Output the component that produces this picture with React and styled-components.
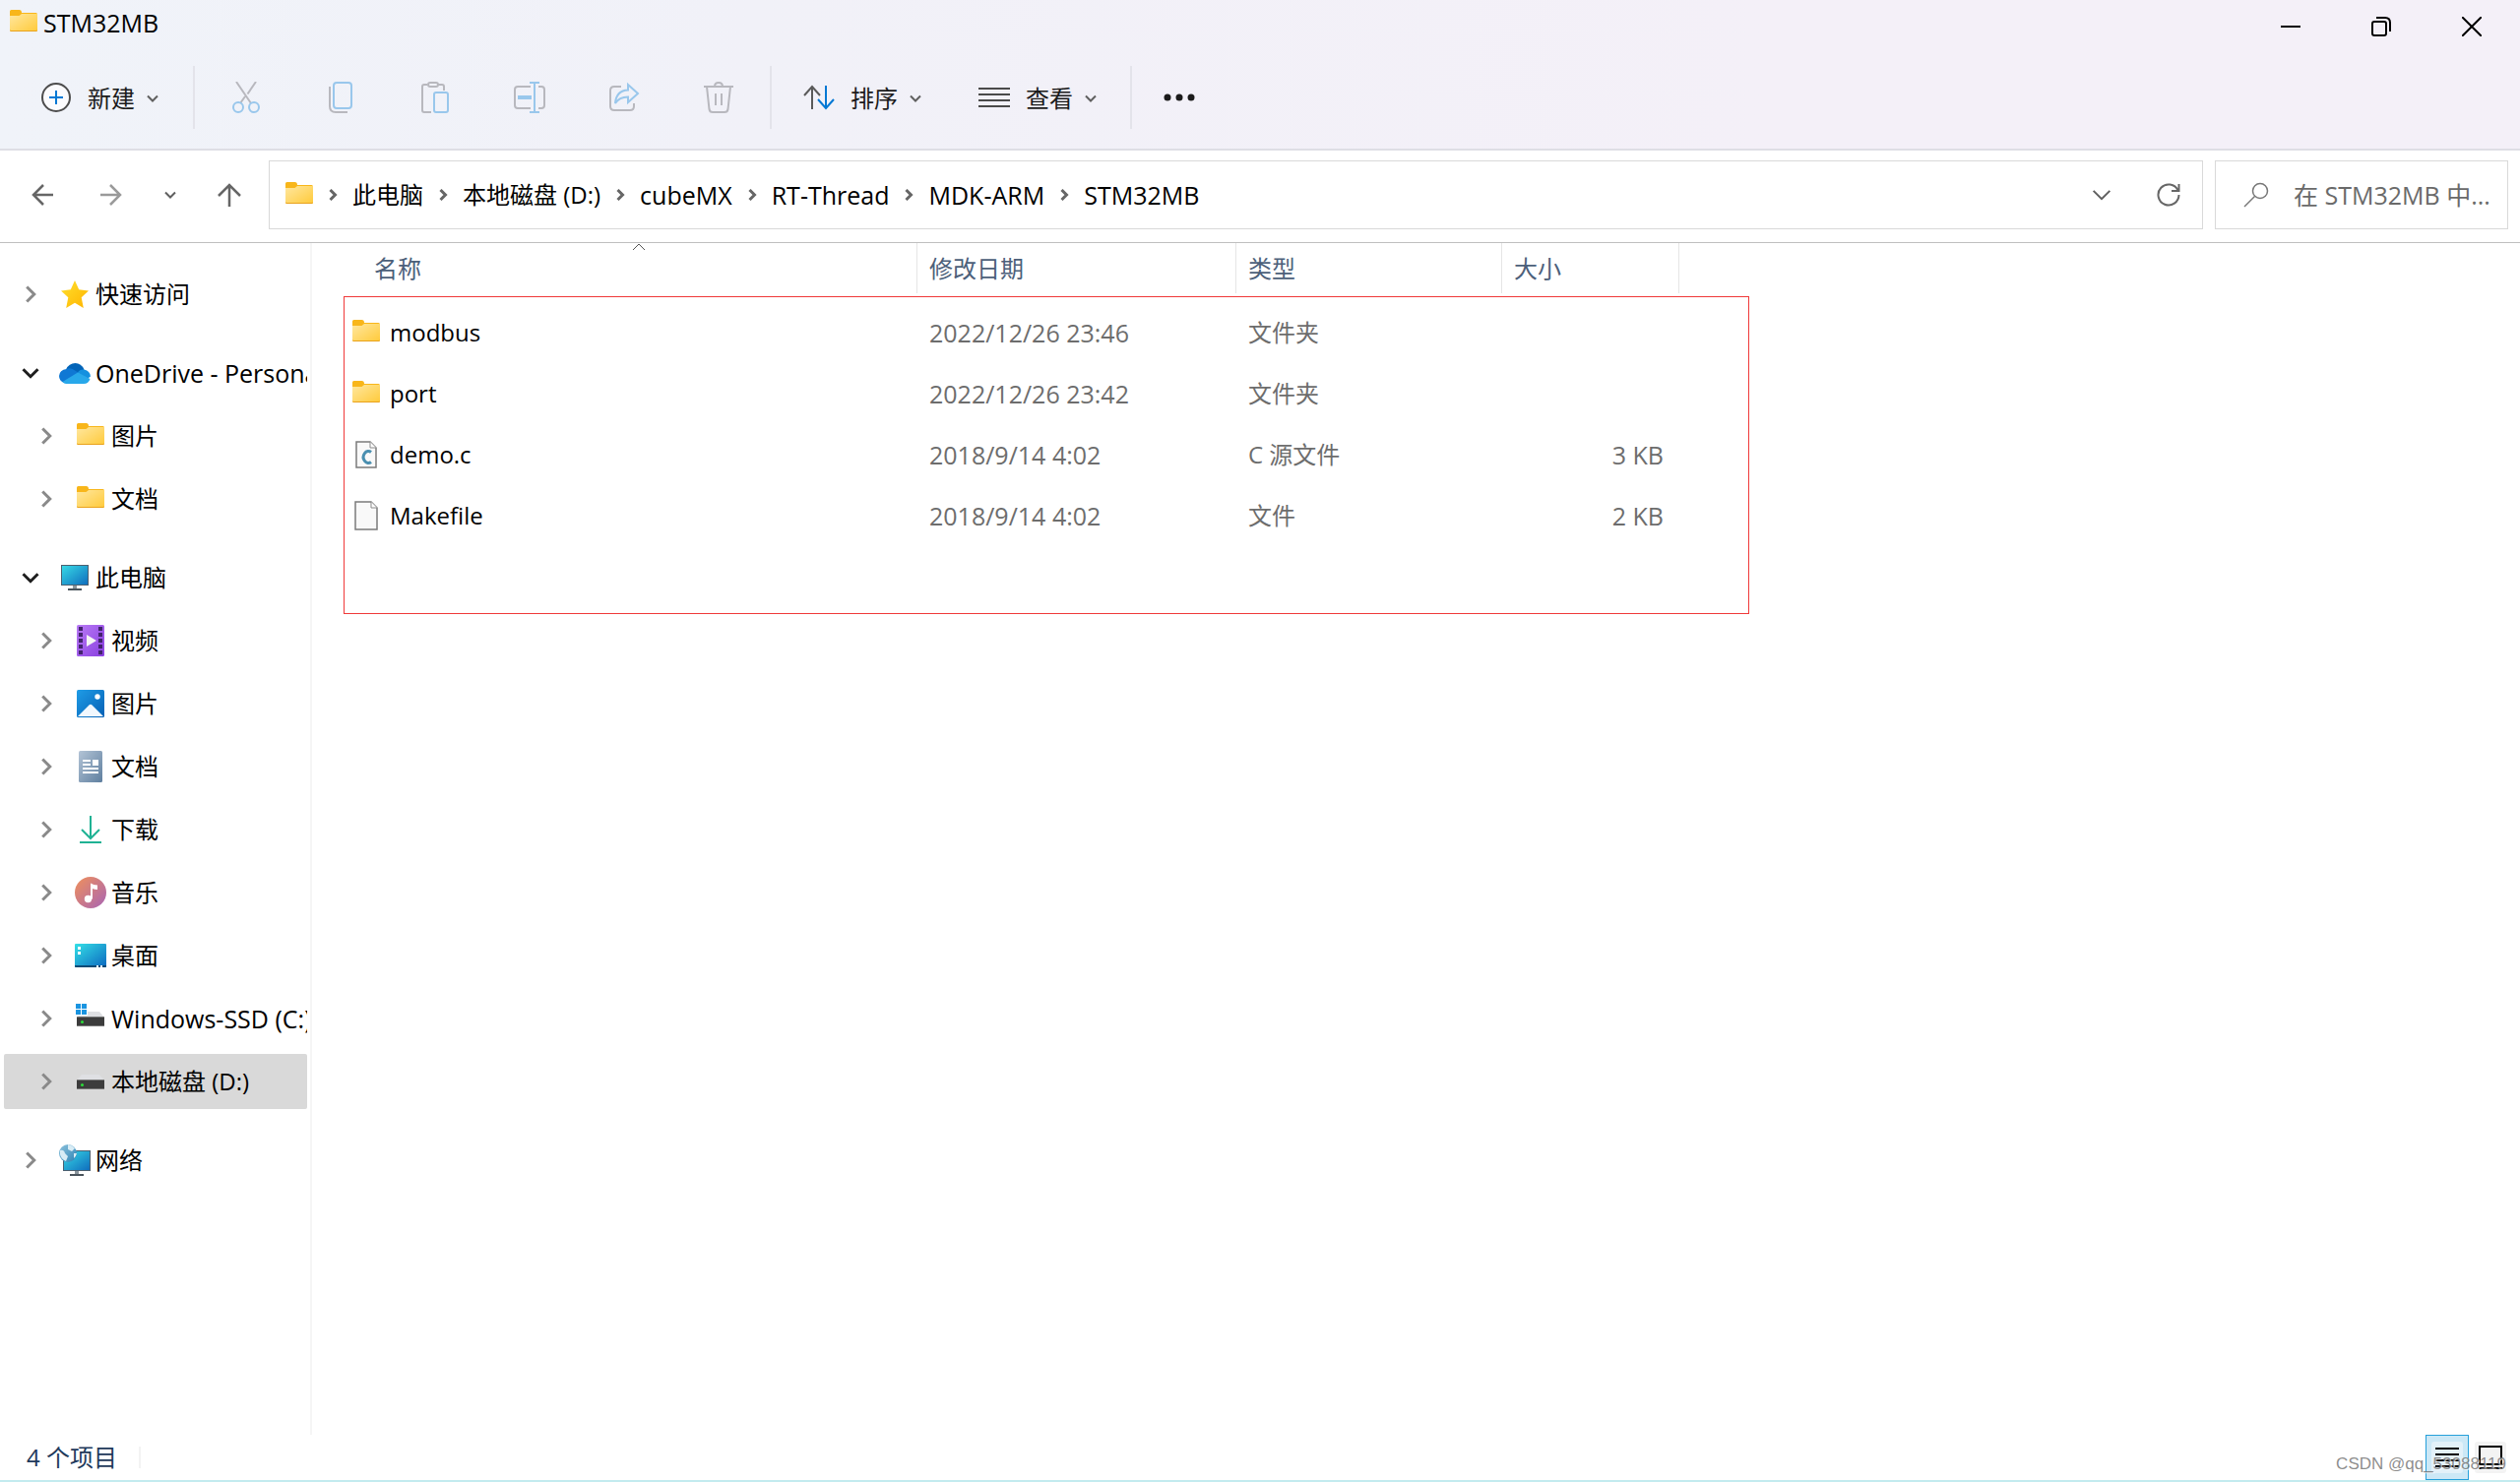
import React from 'react';
import styled, { createGlobalStyle, css } from 'styled-components';

const Global = createGlobalStyle`
  *, *::before, *::after { box-sizing: border-box; }
  body { margin: 0; background: #fff; color: #000; }
  body, button, input {
    font-family: 'Open Sans', 'Noto Sans CJK SC', sans-serif;
    font-size: 24px;
    line-height: 32px;
  }
  button { margin: 0; padding: 0; border: 0; background: none; color: inherit; }
  svg { display: block; flex: none; }
`;

const Window = styled.div`
  display: flex;
  flex-direction: column;
  min-height: 100vh;
`;

const Header = styled.header`
  background: linear-gradient(90deg, #f0f3f9 0%, #f1f1f8 30%, #f4f0f8 70%, #f4f0f8 100%);
  border-bottom: 2px solid #dedee5;
`;

const TitleBar = styled.div`
  display: flex;
  align-items: flex-start;
  justify-content: space-between;
  height: 54px;
  padding-right: 3px;
`;

const Title = styled.div`
  display: flex;
  align-items: center;
  gap: 6px;
  height: 46px;
  padding-left: 10px;
  font-size: 25px;
`;

const WindowControls = styled.div`
  display: flex;
`;

const ControlButton = styled.button`
  display: grid;
  place-items: center;
  width: 92px;
  height: 54px;
`;

const CommandBar = styled.div`
  display: flex;
  align-items: center;
  height: 97px;
  padding: 0 0 8px 25px;
`;

const Command = styled.button`
  display: flex;
  align-items: center;
  height: 64px;
  margin-left: ${(p) => p.$before || 0}px;
  padding: 0 16px;
  gap: 16px;
  color: #1b1b1b;
`;

const IconCommand = styled.button`
  display: grid;
  place-items: center;
  width: 96px;
  height: 64px;
`;

const CommandLabel = styled.span`
  display: flex;
  align-items: center;
  gap: 12px;
  padding-top: 2px;
`;

const Separator = styled.span`
  width: 2px;
  height: 64px;
  margin: 0 ${(p) => p.$after}px 0 ${(p) => p.$before}px;
  background: #e3e3ea;
`;

const NavBar = styled.div`
  display: flex;
  align-items: center;
  height: 94px;
  padding: 0 12px 4px 13px;
  border-bottom: 1px solid #bfbfbf;
`;

const NavButton = styled.button`
  display: grid;
  place-items: center;
  width: ${(p) => p.$width || 60}px;
  height: 60px;
`;

const NavButtons = styled.div`
  display: flex;
  width: 260px;
`;

const AddressBox = styled.nav`
  flex: 1;
  display: flex;
  align-items: center;
  height: 70px;
  padding-left: 16px;
  border: 1px solid #d9d9d9;
`;

const Crumbs = styled.ol`
  flex: 1;
  display: flex;
  align-items: center;
  margin: 0;
  padding: 0;
  list-style: none;
`;

const Crumb = styled.li`
  display: flex;
  align-items: center;
  gap: 14px;
  padding-left: 14px;
  font-size: ${(p) => (p.$latin ? 25 : 24)}px;
  a { color: inherit; text-decoration: none; }
`;

const SearchBox = styled.label`
  display: flex;
  align-items: center;
  gap: 25px;
  width: 298px;
  height: 70px;
  margin-left: 12px;
  padding-left: 28px;
  border: 1px solid #d9d9d9;
`;

const SearchInput = styled.input`
  width: 212px;
  padding: 0;
  border: 0;
  outline: 0;
  background: none;
  font-size: 25px;
  &::placeholder { color: #6a6a6a; opacity: 1; }
`;

const Body = styled.div`
  flex: 1;
  display: flex;
`;

const Sidebar = styled.nav`
  flex: none;
  width: 317px;
  padding: 24px 3px 0 4px;
  border-right: 2px solid #f5f5f5;
`;

const Tree = styled.ul`
  display: grid;
  grid-template-columns: minmax(0, 1fr);
  gap: 8px;
  margin: 0 0 24px;
  padding: 0;
  list-style: none;
`;

const TreeRow = styled.a`
  display: flex;
  align-items: center;
  height: 56px;
  padding-left: ${(p) => (p.$level ? 27 : 11)}px;
  border-radius: 2px;
  overflow: hidden;
  white-space: nowrap;
  color: #000;
  font-size: ${(p) => (p.$latin ? 25 : 24)}px;
  text-decoration: none;
  ${(p) => p.$selected && css`background: #d9d9d9;`}
`;

const TreeToggle = styled.span`
  flex: none;
  display: grid;
  place-items: center;
  width: 32px;
  margin-right: 13px;
`;

const TreeIcon = styled.span`
  flex: none;
  display: grid;
  place-items: center;
  width: 32px;
  margin-right: 5px;
`;

const Main = styled.main`
  flex: 1;
  padding-left: 32px;
`;

const FileTable = styled.table`
  display: block;
  width: 1428px;
  text-align: left;
`;

const HeadGroup = styled.thead`
  display: block;
  height: 54px;
`;

const HeadRow = styled.tr`
  display: grid;
  grid-template-columns: 583px 324px 270px 180px;
`;

const HeadCell = styled.th`
  display: flex;
  height: 51px;
  padding: 10px 0 0 ${(p) => (p.$first ? 31 : 12)}px;
  border-right: 1px solid #e5e5e5;
  color: #4c607a;
  font-weight: 400;
`;

const SortMark = styled.span`
  margin: -10px 0 0 214px;
`;

const Rows = styled.tbody`
  display: block;
  height: 323px;
  padding-top: 5px;
  border: 1px solid #f03a3a;
`;

const FileRow = styled.tr`
  display: grid;
  grid-template-columns: 582px 324px 270px 180px;
  align-items: center;
  height: 62px;
  color: #6d6d6d;
`;

const Cell = styled.td`
  padding: 0 16px 0 12px;
  font-size: ${(p) => (p.$latin ? 25 : 24)}px;
  text-align: ${(p) => (p.$right ? 'right' : 'left')};
`;

const NameCell = styled.td`
  display: flex;
  align-items: center;
  gap: 8px;
  padding: 0 0 0 6px;
  color: #000;
`;

const FileIcon = styled.span`
  display: grid;
  place-items: center;
  width: 32px;
`;

const StatusBar = styled.footer`
  display: flex;
  align-items: center;
  justify-content: space-between;
  height: 48px;
  padding: 0 8px 0 27px;
  border-bottom: 2px solid #c3ebef;
`;

const ItemCount = styled.span`
  padding-right: 22px;
  border-right: 2px solid #f3f3f3;
  line-height: 22px;
  color: #1e395b;
`;

const ViewSwitch = styled.div`
  position: relative;
  display: flex;
`;

const ViewButton = styled.button`
  display: grid;
  place-items: center;
  width: 44px;
  height: 46px;
  ${(p) => p.$active && css`background: #cce8f6; border: 1px solid #26a0da;`}
`;

const Watermark = styled.span`
  position: absolute;
  right: 6px;
  bottom: 5px;
  font: 17px/22px 'Liberation Sans', sans-serif;
  color: rgba(120, 120, 120, 0.85);
  text-shadow: 1px 1px 0 rgba(255, 255, 255, 0.7);
  white-space: nowrap;
`;

const Folder = () => (
  <svg width="28" height="26" viewBox="0 0 28 26">
    <defs>
      <linearGradient id="folder" x1="0" y1="0" x2="1" y2="1">
        <stop offset="0" stopColor="#ffe79f" />
        <stop offset="1" stopColor="#ffca3a" />
      </linearGradient>
    </defs>
    <path d="M0 1.500Q0 0 1.500 0H9.500Q12 0 12 3h14.500Q28 3 28 4.500V12H0z" fill="#f8b61a" />
    <path d="M0 6h9.500l2.500-2h16v16.500q0 1.500-1.500 1.500h-25Q0 22 0 20.500z" fill="url(#folder)" />
    <path d="M0 20.500q0 1.500 1.500 1.500h25q1.500 0 1.500-1.500v-.5q0 1-1.500 1h-25Q0 21 0 20z" fill="#e9a21c" />
  </svg>
);

const Chevron = ({ dir = 'down', size = 12, color = '#5f5f5f', stroke = 2 }) => {
  const d = { down: 'M1 3.500l5 5 5-5', right: 'M3.500 1l5 5-5 5' }[dir];
  return (
    <svg width={size} height={size} viewBox="0 0 12 12" fill="none" stroke={color} strokeWidth={(stroke * 12) / size}>
      <path d={d} />
    </svg>
  );
};

const Line = ({ w = 32, h = 32, stroke = '#b8b8be', sw = 2, children }) => (
  <svg width={w} height={h} viewBox={`0 0 ${w} ${h}`} fill="none" stroke={stroke} strokeWidth={sw}>
    {children}
  </svg>
);

const blue = '#99c7ec';

const NewIcon = () => (
  <Line stroke="#4d4d4d">
    <circle cx="16" cy="16" r="14" fill="#fbfbfd" />
    <path d="M16 9v14M9 16h14" stroke="#0078d4" />
  </Line>
);
const CutIcon = () => (
  <Line>
    <path d="M6 0l15 22M26 0L17.500 12.500M15 15l-5 7" />
    <g stroke={blue}><circle cx="8" cy="26" r="5" /><circle cx="24" cy="26" r="5" /></g>
  </Line>
);
const CopyIcon = () => (
  <Line>
    <path d="M5 5v20q0 6 6 6h12" />
    <rect x="9" y="1" width="18" height="26" rx="3" stroke={blue} />
  </Line>
);
const PasteIcon = () => (
  <Line>
    <path d="M8 3H5Q3 3 3 5v24q0 2 2 2h7M19 3h4q2 0 2 2v4" />
    <rect x="9" y="1" width="10" height="4" rx="2" />
    <rect x="15" y="11" width="14" height="20" rx="2" stroke={blue} />
  </Line>
);
const RenameIcon = () => (
  <Line>
    <path d="M17 5H4Q1 5 1 8v16q0 3 3 3h13M25 5h3q3 0 3 3v16q0 3-3 3h-3" />
    <path d="M4 16h14" stroke={blue} strokeWidth="4" />
    <path d="M16 1h10M16 31h10M21 1v30" stroke={blue} />
  </Line>
);
const ShareIcon = () => (
  <Line>
    <path d="M13 5H6Q2 5 2 9v16q0 4 4 4h16q4 0 4-4v-3" />
    <path d="M20 3l10 9-10 9v-5.500q-9 0-13 6.500 1-13 13-13.500z" stroke={blue} />
  </Line>
);
const DeleteIcon = () => (
  <Line>
    <path d="M1 5h30M12 5q0-4 4-4t4 4M4 5l2.500 23q.5 3 3.500 3h12q3 0 3.500-3L28 5M13 12v12M19 12v12" />
  </Line>
);
const SortIcon = () => (
  <Line stroke="#5a5a5a">
    <path d="M9 28V5M1 14l8-9 8 9" />
    <path d="M23 4v23M15 18l8 9 8-9" stroke="#0078d4" />
  </Line>
);
const ListIcon = () => (
  <Line stroke="#4a4a4a">
    <path d="M0 7h32M0 13h32M0 19h32M0 25h32" />
  </Line>
);
const MoreIcon = () => (
  <svg width="32" height="8" fill="#1b1b1b"><circle cx="4" cy="4" r="3.500" /><circle cx="16" cy="4" r="3.500" /><circle cx="28" cy="4" r="3.500" /></svg>
);

const ArrowIcon = ({ dir, color = '#666' }) => (
  <Line w={24} h={24} stroke={color} sw={2.5}>
    <path d={{ left: 'M23 12H3M13 2L3 12l10 10', right: 'M1 12h20M11 2l10 10-10 10', up: 'M12 24V2M1 13L12 2l11 11' }[dir]} />
  </Line>
);
const RefreshIcon = () => (
  <Line w={24} h={24} stroke="#666">
    <path d="M21.500 7.500A10.500 10.500 0 1 0 22.500 12M22.500 1v7H15" />
  </Line>
);
const SearchIcon = () => (
  <Line w={26} h={26} stroke="#777" sw={1.5}>
    <circle cx="17" cy="9" r="7.500" /><path d="M11.500 14.500L1 25" />
  </Line>
);

const Grad = ({ id, from, to }) => (
  <linearGradient id={id} x1="0" y1="0" x2="1" y2="1">
    <stop offset="0" stopColor={from} /><stop offset="1" stopColor={to} />
  </linearGradient>
);

const StarIcon = () => (
  <svg width="28" height="28" viewBox="0 0 28 28">
    <defs><Grad id="star" from="#ffe02e" to="#ffb400" /></defs>
    <path d="M14 0l4.200 9.300 9.800 1.100-7.300 6.800L22.800 28 14 22.800 5.200 28l2.100-10.800L0 10.400l9.800-1.100z" fill="url(#star)" />
  </svg>
);
const CloudIcon = () => (
  <svg width="32" height="21" viewBox="0 0 32 21">
    <path d="M7 6.500Q10 0 16.500 0q6 0 9 6.500L17 12z" fill="#0364b8" />
    <path d="M7.500 6Q12 4 17 8l6 4-18 8q-5-2-5-7Q.500 7 7.500 6z" fill="#0f78d4" />
    <path d="M19 9.500Q21 6 25.500 6.500q6 1.500 6.500 7l-4 3z" fill="#1490df" />
    <path d="M3.500 19L19 9.500 31.500 16Q30 21 25 21H7q-2 0-3.500-2z" fill="#28a8ea" />
  </svg>
);
const MonitorShape = () => (
  <>
    <defs><Grad id="screen" from="#37dbe6" to="#0f6cbd" /></defs>
    <rect x=".5" y=".5" width="27" height="20" fill="url(#screen)" stroke="#4d6070" />
    <path d="M12 21h4v3h-4z" fill="#8b959c" /><path d="M7 24h14v2H7z" fill="#4a545c" />
  </>
);
const PcIcon = () => <svg width="28" height="26" viewBox="0 0 28 26"><MonitorShape /></svg>;
const NetworkIcon = () => (
  <svg width="32" height="32" viewBox="0 0 32 32">
    <g transform="translate(4 6)"><MonitorShape /></g>
    <defs><Grad id="globe" from="#8fc3dd" to="#2b83b5" /></defs>
    <circle cx="9" cy="9" r="9" fill="url(#globe)" />
    <path d="M1 6q4-1 5 3l3 3-2 5q-5-2-6-7zM9 0q5 1 7 4l-3 3-4-2zM15 9l3 0q-1 4-3 5z" fill="#d8ecf5" />
  </svg>
);
const VideoIcon = () => (
  <svg width="28" height="32" viewBox="0 0 28 32">
    <defs><Grad id="video" from="#b87af5" to="#8a3fe0" /></defs>
    <rect width="28" height="32" rx="1.500" fill="url(#video)" />
    {[2, 8, 14, 20, 26].map((y) => (
      <g key={y} fill="#43246e"><rect x="2" y={y} width="4" height="4" /><rect x="22" y={y} width="4" height="4" /></g>
    ))}
    <path d="M10 10l10 6-10 6z" fill="#f4f4f4" />
  </svg>
);
const PictureIcon = () => (
  <svg width="28" height="28" viewBox="0 0 28 28">
    <defs><Grad id="pic" from="#1f9ce6" to="#0660b5" /></defs>
    <rect width="28" height="28" rx="1.500" fill="url(#pic)" />
    <circle cx="21" cy="7" r="2.700" fill="#fff" />
    <path d="M1 27l11.500-11.500q1.500-1.500 3 0L27 27z" fill="#f2f8fe" />
  </svg>
);
const DocIcon = () => (
  <svg width="24" height="32" viewBox="0 0 24 32">
    <defs><Grad id="doc" from="#b3c4d6" to="#5f7f9f" /></defs>
    <rect width="24" height="32" rx="1.500" fill="url(#doc)" />
    <path d="M4 9h8v2H4zM4 13h8v2H4zM14 9h6v6h-6zM4 17h16v2H4zM4 21h16v2H4z" fill="#fff" />
  </svg>
);
const DownloadIcon = () => (
  <Line w={22} h={28} stroke="#1fb294">
    <path d="M11 0v23M2 14l9 9 9-9M0 27h22" />
  </Line>
);
const MusicIcon = () => (
  <svg width="32" height="32" viewBox="0 0 32 32">
    <defs><Grad id="music" from="#f0905a" to="#a865b5" /></defs>
    <circle cx="16" cy="16" r="16" fill="url(#music)" />
    <circle cx="13.500" cy="22.500" r="3.700" fill="#fff" />
    <path d="M16 6.500q3 2 7 2V13q-3 0-5-1v10.500h-2z" fill="#fff" />
  </svg>
);
const DesktopIcon = () => (
  <svg width="32" height="24" viewBox="0 0 32 24">
    <defs><Grad id="desk" from="#34e0e6" to="#0c68c0" /></defs>
    <rect width="32" height="24" rx="1" fill="url(#desk)" />
    <path d="M0 22h32v1q0 1-1 1H1q-1 0-1-1z" fill="#0b4a75" />
    <path d="M3 3h3v3H3zM3 8h3v3H3zM22 22h2v2h-2zM26 22h2v2h-2z" fill="#fff" />
  </svg>
);
const DriveIcon = ({ windows }) => (
  <svg width="30" height="32" viewBox="0 0 30 32">
    <path d="M6 9h18l5 6H1z" fill="#dfe0e3" />
    <path d="M1 14h28v10H1z" fill="#3c3c3c" />
    <path d="M1 14h28v1H1zM1 23h28v1H1z" fill="#777" />
    <circle cx="6.500" cy="19.500" r="1.500" fill="#2bdc3a" />
    {windows && <><path d="M0 0h12v13H0z" fill="#fff" /><path d="M0 1h5v5H0zM6 1h5v5H6zM0 7h5v5H0zM6 7h5v5H6z" fill="#1a94e0" /></>}
  </svg>
);

const PageShape = ({ width, height }) => (
  <>
    <path d={`M1 1h${width - 8}l6 6v${height - 8}H1z`} fill="#f9f9f9" stroke="#7b7b7b" strokeWidth="1.500" />
    <path d={`M${width - 7} 1v6h6`} fill="#fff" stroke="#8b8b8b" />
  </>
);
const CFileIcon = () => (
  <svg width="22" height="28" viewBox="0 0 22 28">
    <PageShape width={22} height={28} />
    <path d="M16 11.500a5 6 0 1 0 0 10" fill="none" stroke="#4a8fb0" strokeWidth="3" />
  </svg>
);
const PlainFileIcon = () => <svg width="24" height="30" viewBox="0 0 24 30"><PageShape width={24} height={30} /></svg>;

const crumbs = [
  { label: '此电脑' },
  { label: '本地磁盘 (D:)' },
  { label: 'cubeMX', latin: true },
  { label: 'RT-Thread', latin: true },
  { label: 'MDK-ARM', latin: true },
  { label: 'STM32MB', latin: true },
];

const tree = [
  [{ label: '快速访问', icon: <StarIcon /> }],
  [
    { label: 'OneDrive - Personal', icon: <CloudIcon />, open: true, latin: true },
    { label: '图片', icon: <Folder />, level: 1 },
    { label: '文档', icon: <Folder />, level: 1 },
  ],
  [
    { label: '此电脑', icon: <PcIcon />, open: true },
    { label: '视频', icon: <VideoIcon />, level: 1 },
    { label: '图片', icon: <PictureIcon />, level: 1 },
    { label: '文档', icon: <DocIcon />, level: 1 },
    { label: '下载', icon: <DownloadIcon />, level: 1 },
    { label: '音乐', icon: <MusicIcon />, level: 1 },
    { label: '桌面', icon: <DesktopIcon />, level: 1 },
    { label: 'Windows-SSD (C:)', icon: <DriveIcon windows />, level: 1, latin: true },
    { label: '本地磁盘 (D:)', icon: <DriveIcon />, level: 1, selected: true },
  ],
  [{ label: '网络', icon: <NetworkIcon /> }],
];

const files = [
  { name: 'modbus', icon: <Folder />, date: '2022/12/26 23:46', type: '文件夹', size: '' },
  { name: 'port', icon: <Folder />, date: '2022/12/26 23:42', type: '文件夹', size: '' },
  { name: 'demo.c', icon: <CFileIcon />, date: '2018/9/14 4:02', type: 'C 源文件', size: '3 KB' },
  { name: 'Makefile', icon: <PlainFileIcon />, date: '2018/9/14 4:02', type: '文件', size: '2 KB' },
];

const tools = [
  ['剪切', <CutIcon />], ['复制', <CopyIcon />], ['粘贴', <PasteIcon />],
  ['重命名', <RenameIcon />], ['共享', <ShareIcon />], ['删除', <DeleteIcon />],
];

export default function App() {
  return (
    <Window>
      <Global />
      <Header>
        <TitleBar>
          <Title><Folder />STM32MB</Title>
          <WindowControls>
            <ControlButton aria-label="最小化"><Line w={20} h={20} stroke="#000"><path d="M0 10h20" /></Line></ControlButton>
            <ControlButton aria-label="还原">
              <Line w={20} h={20} stroke="#000"><rect x="1" y="5" width="14" height="14" rx="2" /><path d="M5 1h9q5 0 5 5v9" /></Line>
            </ControlButton>
            <ControlButton aria-label="关闭"><Line w={20} h={20} stroke="#000"><path d="M0 0l20 20M20 0L0 20" /></Line></ControlButton>
          </WindowControls>
        </TitleBar>
        <CommandBar>
          <Command><NewIcon /><CommandLabel>新建<Chevron /></CommandLabel></Command>
          <Separator $before={19} $after={4} />
          {tools.map(([label, icon]) => <IconCommand key={label} aria-label={label}>{icon}</IconCommand>)}
          <Separator $before={4} $after={16} />
          <Command><SortIcon /><CommandLabel>排序<Chevron /></CommandLabel></Command>
          <Command $before={26}><ListIcon /><CommandLabel>查看<Chevron /></CommandLabel></Command>
          <Separator $before={18} $after={16} />
          <Command aria-label="更多"><MoreIcon /></Command>
        </CommandBar>
      </Header>

      <NavBar>
        <NavButtons>
          <NavButton aria-label="后退"><ArrowIcon dir="left" /></NavButton>
          <NavButton $width={80} aria-label="前进"><ArrowIcon dir="right" color="#9a9a9a" /></NavButton>
          <NavButton $width={40} aria-label="最近位置"><Chevron /></NavButton>
          <NavButton $width={80} aria-label="上移"><ArrowIcon dir="up" /></NavButton>
        </NavButtons>
        <AddressBox aria-label="地址">
          <Folder />
          <Crumbs>
            {crumbs.map((c) => (
              <Crumb key={c.label} $latin={c.latin}>
                <Chevron dir="right" stroke={3} color="#666" />
                <a href="#path">{c.label}</a>
              </Crumb>
            ))}
          </Crumbs>
          <NavButton $width={68} aria-label="展开"><Chevron size={20} /></NavButton>
          <NavButton $width={68} aria-label="刷新"><RefreshIcon /></NavButton>
        </AddressBox>
        <SearchBox>
          <SearchIcon />
          <SearchInput aria-label="搜索" placeholder="在 STM32MB 中..." />
        </SearchBox>
      </NavBar>

      <Body>
        <Sidebar>
          {tree.map((group) => (
            <Tree key={group[0].label}>
              {group.map((n) => (
                <li key={n.label}>
                  <TreeRow href="#node" $level={n.level} $selected={n.selected} $latin={n.latin}>
                    <TreeToggle>
                      <Chevron dir={n.open ? 'down' : 'right'} size={18} stroke={3} color={n.open ? '#1f1f1f' : '#8a8a8a'} />
                    </TreeToggle>
                    <TreeIcon>{n.icon}</TreeIcon>
                    {n.label}
                  </TreeRow>
                </li>
              ))}
            </Tree>
          ))}
        </Sidebar>
        <Main>
          <FileTable>
            <HeadGroup>
              <HeadRow>
                <HeadCell $first>
                  名称
                  <SortMark><svg width="14" height="8" fill="none" stroke="#555"><path d="M1 7l6-6 6 6" /></svg></SortMark>
                </HeadCell>
                <HeadCell>修改日期</HeadCell>
                <HeadCell>类型</HeadCell>
                <HeadCell>大小</HeadCell>
              </HeadRow>
            </HeadGroup>
            <Rows>
              {files.map((f) => (
                <FileRow key={f.name}>
                  <NameCell><FileIcon>{f.icon}</FileIcon>{f.name}</NameCell>
                  <Cell $latin>{f.date}</Cell>
                  <Cell>{f.type}</Cell>
                  <Cell $latin $right>{f.size}</Cell>
                </FileRow>
              ))}
            </Rows>
          </FileTable>
        </Main>
      </Body>

      <StatusBar>
        <ItemCount>4 个项目</ItemCount>
        <ViewSwitch>
          <ViewButton $active aria-label="详细信息">
            <svg width="32" height="32"><rect width="32" height="32" rx="3" fill="#e3f1f9" /><path d="M4 7h24M4 13h24M4 19h24M4 25h24" stroke="#000" strokeWidth="2" /></svg>
          </ViewButton>
          <ViewButton aria-label="大图标">
            <svg width="32" height="32"><rect width="32" height="32" rx="3" fill="#f3f3f3" /><path d="M5 5h22v18H5zM4 27h24" stroke="#000" strokeWidth="2" fill="none" /></svg>
          </ViewButton>
          <Watermark>CSDN @qq_53088119</Watermark>
        </ViewSwitch>
      </StatusBar>
    </Window>
  );
}
